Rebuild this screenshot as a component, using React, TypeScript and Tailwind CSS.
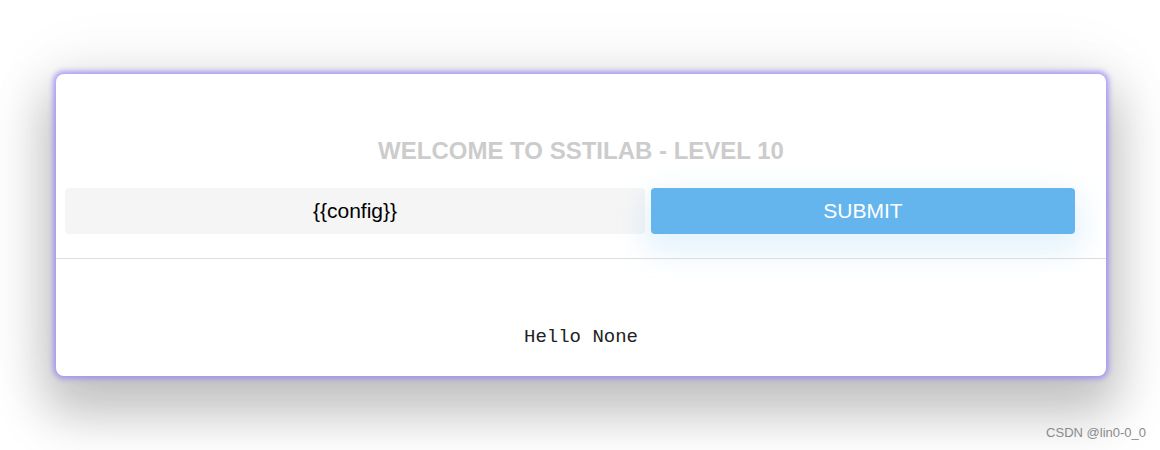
export default function App() {
  return (
    <div
      className="relative w-[1160px] h-[450px] overflow-hidden bg-white px-[56px] pt-[74px]"
      style={{ fontFamily: '"Liberation Sans", Arial, sans-serif' }}
    >
      {/* 卡片 */}
      <div className="w-[1050px] h-[302px] bg-white rounded-[8px] shadow-[0_0_5px_3px_rgba(150,135,245,0.75),0_28px_50px_12px_rgba(0,0,0,0.22),0_0_70px_10px_rgba(0,0,0,0.06)] flex flex-col">
        <h1 className="pt-[63px] text-center text-[24px] leading-[28px] font-bold text-[#cccccc]">
          WELCOME TO SSTILAB - LEVEL 10
        </h1>

        <div className="flex gap-[6px] pl-[9px] pr-[31px] mt-[23px]">
          <div className="w-[580px] h-[46px] bg-[#f5f5f5] rounded-[4px] flex items-center justify-center text-[21px] text-black">
            {'{{config}}'}
          </div>
          <button className="w-[424px] h-[46px] bg-[#64b5ed] rounded-[4px] text-white text-[21px] shadow-[0_12px_30px_6px_rgba(100,181,237,0.18)]">
            SUBMIT
          </button>
        </div>

        <div className="mt-[24px] h-px bg-[#dddddd]" />

        <div
          className="pt-[66px] text-center text-[19px] leading-[24px] text-[#222222]"
          style={{ fontFamily: '"Liberation Mono", "Courier New", monospace' }}
        >
          Hello None
        </div>
      </div>

      <div className="absolute right-[14px] bottom-[8px] text-[13px] text-[#8a8a8a]">
        CSDN @lin0-0_0
      </div>
    </div>
  );
}
